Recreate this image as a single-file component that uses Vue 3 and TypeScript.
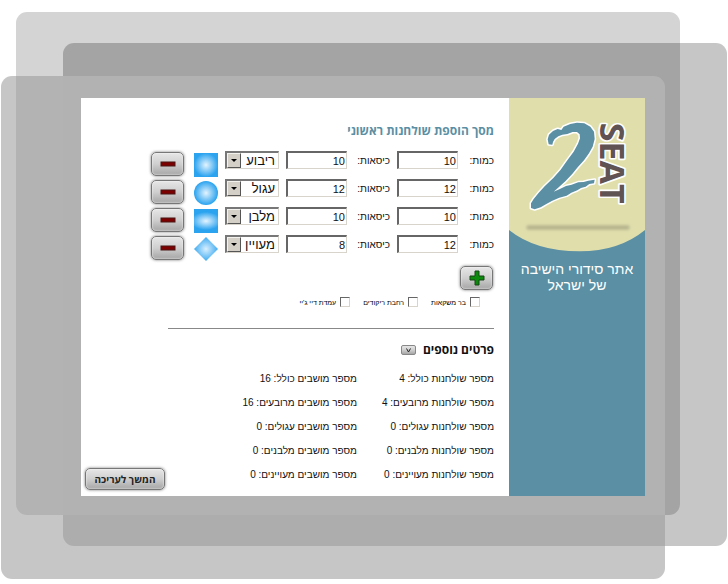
<script setup lang="ts">
import { ref } from 'vue'

type Shape = 'square' | 'circle' | 'rectangle' | 'diamond'

interface TableRow {
  id: number
  amount: number
  chairs: number
  shape: Shape
}

const shapeNames: Record<Shape, string> = {
  square: 'ריבוע',
  circle: 'עגול',
  rectangle: 'מלבן',
  diamond: 'מעויין',
}

const rows = ref<TableRow[]>([
  { id: 1, amount: 10, chairs: 10, shape: 'square' },
  { id: 2, amount: 12, chairs: 12, shape: 'circle' },
  { id: 3, amount: 10, chairs: 10, shape: 'rectangle' },
  { id: 4, amount: 12, chairs: 8, shape: 'diamond' },
])

const extras = ref([
  { id: 'bar', label: 'בר משקאות', checked: false },
  { id: 'dance', label: 'רחבת ריקודים', checked: false },
  { id: 'dj', label: "עמדת דיי ג'יי", checked: false },
])

const stats = [
  { tables: 'מספר שולחנות כולל: 4', seats: 'מספר מושבים כולל: 16' },
  { tables: 'מספר שולחנות מרובעים: 4', seats: 'מספר מושבים מרובעים: 16' },
  { tables: 'מספר שולחנות עגולים: 0', seats: 'מספר מושבים עגולים: 0' },
  { tables: 'מספר שולחנות מלבנים: 0', seats: 'מספר מושבים מלבנים: 0' },
  { tables: 'מספר שולחנות מעויינים: 0', seats: 'מספר מושבים מעויינים: 0' },
]

const open = ref(true)

function addRow() {
  const id = Math.max(0, ...rows.value.map((r) => r.id)) + 1
  rows.value.push({ id, amount: 10, chairs: 10, shape: 'square' })
}

function removeRow(id: number) {
  rows.value = rows.value.filter((r) => r.id !== id)
}
</script>

<template>
  <div class="frame" dir="rtl">
    <div class="sheet back"></div>
    <div class="sheet middle"></div>
    <div class="sheet front"></div>
    <div class="sheet core"></div>

    <div class="card">
      <aside class="side">
        <svg class="brand" viewBox="0 0 408 465" aria-label="2SEAT">
          <defs>
            <filter id="soft" x="-10%" y="-300%" width="120%" height="700%">
              <feGaussianBlur stdDeviation="5" />
            </filter>
          </defs>
          <path d="M0 0H408V396Q330 460 212 460Q80 460 0 396Z" fill="#e0dfac" />
          <rect x="52" y="382" width="310" height="13" rx="6" fill="#b5b28c" filter="url(#soft)" />
          <path
            class="mark"
            d="M119 139L116 124L120 110L132 99L146 93L157 96L164 86L184 78L204 74L226 76
               L244 86L255 101L257 123L251 146L240 166L225 187L206 208L189 229L169 250
               L150 267L134 281L151 274L171 264L188 260L208 253L224 252L238 248L257 245
               L255 256L241 258L230 266L216 270L205 277L187 284L173 293L151 299L130 308
               L112 318L95 328L77 334L66 330L66 316L74 303L88 286L107 265L133 240L155 215
               L175 187L194 161L207 137L213 121L212 109L204 102L191 102L175 108L160 110
               L148 115L137 123L132 132L130 140Z"
          />
          <text class="seat" transform="translate(274 74) rotate(90)">SEAT</text>
        </svg>
        <p class="tagline">אתר סידורי הישיבה<br />של ישראל</p>
      </aside>

      <main class="main">
        <h1 class="title">מסך הוספת שולחנות ראשוני</h1>

        <div class="rows">
          <div v-for="row in rows" :key="row.id" class="row">
            <label class="amount-label" :for="`amount-${row.id}`">כמות:</label>
            <input :id="`amount-${row.id}`" v-model="row.amount" class="field" type="text" />
            <label class="chairs-label" :for="`chairs-${row.id}`">כיסאות:</label>
            <input :id="`chairs-${row.id}`" v-model="row.chairs" class="field" type="text" />
            <span class="picker">
              <select v-model="row.shape" aria-label="צורה">
                <option v-for="(name, key) in shapeNames" :key="key" :value="key">{{ name }}</option>
              </select>
              <span class="arrow"></span>
            </span>
            <span class="shape" :class="row.shape"></span>
            <button class="btn icon-btn" type="button" aria-label="הסר" @click="removeRow(row.id)">
              <svg width="16" height="6" viewBox="0 0 16 6">
                <rect x="1" y="1" width="14" height="4" fill="#7c0000" stroke="#4a1414" />
              </svg>
            </button>
          </div>
        </div>

        <button class="btn icon-btn add" type="button" aria-label="הוסף" @click="addRow">
          <svg width="16" height="16" viewBox="0 0 16 16">
            <path d="M6 1H10V6H15V10H10V15H6V10H1V6H6Z" fill="#0c8a0c" stroke="#174517" />
          </svg>
        </button>

        <div class="extras">
          <label v-for="item in extras" :key="item.id" class="extra">
            <input v-model="item.checked" type="checkbox" />
            <span>{{ item.label }}</span>
          </label>
        </div>

        <hr />

        <h2 class="subtitle">
          פרטים נוספים
          <button class="btn toggle" type="button" aria-label="הצג פרטים" @click="open = !open">
            <svg width="5" height="5" viewBox="0 0 5 5">
              <path d="M0.5 0.5L2.5 4L4.5 0.5" fill="none" stroke="#222" />
            </svg>
          </button>
        </h2>

        <div class="bottom">
          <div v-show="open" class="stats">
            <template v-for="line in stats" :key="line.tables">
              <span>{{ line.tables }}</span>
              <span>{{ line.seats }}</span>
            </template>
          </div>
          <button class="btn next" type="button">המשך לעריכה</button>
        </div>
      </main>
    </div>
  </div>
</template>

<style>
body {
  background: #fff;
}
</style>

<style scoped>
* {
  box-sizing: border-box;
}

.frame {
  position: relative;
  padding: 98px 83px 88px 81px;
  font-family: 'Liberation Sans', Arial, sans-serif;
  color: #111;
}

.sheet {
  position: absolute;
  border-radius: 11px;
}

.back {
  inset: 12px 48px 69px 16px;
  background: #d4d4d4;
}

.middle {
  inset: 43px 1px 38px 63px;
  background: rgba(0, 0, 0, 0.225);
}

.front {
  inset: 76px 63px 5px 1px;
  background: rgba(153, 153, 153, 0.56);
}

.core {
  inset: 76px 63px 69px 63px;
  border-radius: 0 11px 0 0;
  background: #b2b2b2;
}

.card {
  position: relative;
  display: flex;
  background: #fff;
}

.side {
  flex: 0 0 136px;
  background: #5b8fa4;
}

.brand {
  display: block;
  width: 100%;
}

.mark {
  fill: #5b8fa4;
  stroke: #fff;
  stroke-width: 9px;
  stroke-linejoin: round;
  paint-order: stroke;
}

.seat {
  font: bold 102px 'Open Sans', sans-serif;
  direction: ltr;
  fill: #5f5353;
  stroke: #fff;
  stroke-width: 10px;
  stroke-linejoin: round;
  paint-order: stroke;
}

.tagline {
  margin: 8px 0 0;
  font-size: 14px;
  line-height: 16px;
  text-align: center;
  color: #fff;
}

.main {
  flex: 1;
  min-width: 0;
  padding: 25px 15px 6px 4px;
}

.title {
  margin: 0 0 12px;
  font: bold 12px 'Open Sans', 'Liberation Sans', sans-serif;
  line-height: 16px;
  color: #5b8fa4;
}

.rows {
  display: grid;
}

.row {
  display: flex;
  align-items: flex-start;
  height: 28px;
  font-size: 10px;
  line-height: 20px;
}

.amount-label {
  width: 36px;
}

.chairs-label {
  width: 43px;
}

.field {
  width: 61px;
  height: 18px;
  margin-left: 7px;
  padding: 1px 1px 0;
  border: 1px solid #d8d4cc;
  border-top: 2px solid #666;
  border-left: 2px solid #666;
  background: #fff;
  font: 11px 'Liberation Sans', Arial, sans-serif;
  color: #111;
  text-align: right;
  direction: ltr;
}

.picker {
  position: relative;
  width: 54px;
  height: 18px;
  margin-left: 7px;
}

.picker select {
  display: block;
  appearance: none;
  width: 100%;
  height: 100%;
  padding: 0 3px 0 16px;
  border: 1px solid #d8d4cc;
  border-top: 2px solid #777;
  border-left: 2px solid #777;
  border-radius: 0;
  background: #fff;
  font: 13px 'Liberation Sans', Arial, sans-serif;
  line-height: 15px;
  color: #111;
}

.arrow {
  position: absolute;
  top: 2px;
  left: 2px;
  display: grid;
  place-items: center;
  width: 14px;
  height: 15px;
  border: 1px solid #f4f2ee;
  border-right-color: #555;
  border-bottom-color: #555;
  background: #d4d0c8;
  pointer-events: none;
}

.arrow::before {
  content: '';
  border: 3px solid transparent;
  border-top-color: #000;
  border-bottom: 0;
}

.shape {
  width: 24px;
  height: 24px;
  margin: 2px 0 0 10px;
  background: radial-gradient(circle, #e4f4ff, #2ba3ef 70%);
}

.circle {
  border-radius: 50%;
}

.rectangle {
  background: radial-gradient(ellipse 15px 9px, #e4f4ff, #2ba3ef);
}

.diamond {
  clip-path: polygon(50% 0, 100% 50%, 50% 100%, 0 50%);
  background: radial-gradient(circle, #d8efff, #2ba3ef 80%);
}

.btn {
  display: grid;
  place-items: center;
  padding: 0;
  border: 1px solid #777;
  border-radius: 5px;
  background: linear-gradient(#e6e6e6, #cfcfcf 50%, #a6a6a6);
  box-shadow: 0 0 3px #777, inset 0 0 2px #fff;
  color: #222;
}

.icon-btn {
  width: 33px;
  height: 24px;
  margin: 1px 0 0;
}

.add {
  margin: 3px 1px 0 0;
}

.extras {
  display: flex;
  gap: 13px;
  margin: 5px 14px 0 0;
}

.extra {
  display: flex;
  align-items: center;
  gap: 4px;
  font-size: 7px;
  line-height: 16px;
  color: #000;
  white-space: nowrap;
}

.extra input {
  appearance: none;
  width: 10px;
  height: 10px;
  margin: 0 0 2px;
  border: 1px solid #d8d4cc;
  border-top-color: #666;
  border-left-color: #666;
  background: #fff;
}

.extra input:checked {
  background: #555;
}

hr {
  width: 326px;
  max-width: 100%;
  margin: 17px 0 13px auto;
  margin-right: 0;
  border: 0;
  border-top: 1px solid #888;
}

.subtitle {
  display: flex;
  align-items: center;
  gap: 7px;
  margin: 0;
  font: bold 12px 'Open Sans', 'Liberation Sans', sans-serif;
  line-height: 16px;
}

.toggle {
  width: 15px;
  height: 10px;
  border-color: #888;
  border-radius: 2px;
  box-shadow: none;
}

.bottom {
  display: flex;
  align-items: flex-end;
  justify-content: space-between;
  margin-top: 9px;
}

.stats {
  display: grid;
  grid-template-columns: 137px auto;
  padding-bottom: 3px;
  font-size: 10px;
  line-height: 24px;
  white-space: nowrap;
}

.next {
  width: 80px;
  height: 22px;
  font: bold 10px 'Open Sans', 'Liberation Sans', sans-serif;
}
</style>
